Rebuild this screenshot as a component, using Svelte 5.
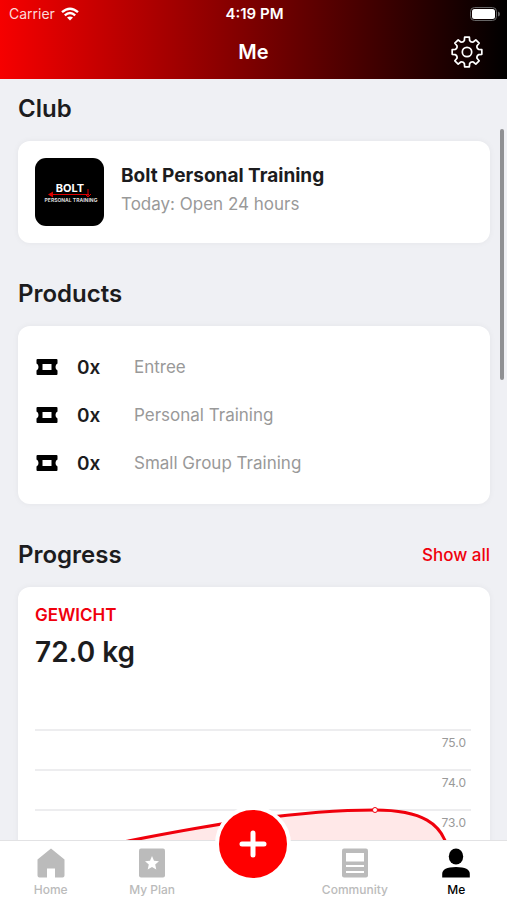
<script>
	const products = [
		{ count: 0, name: 'Entree' },
		{ count: 0, name: 'Personal Training' },
		{ count: 0, name: 'Small Group Training' }
	];

	const gridLines = [
		{ y: 20, label: '75.0' },
		{ y: 60, label: '74.0' },
		{ y: 100, label: '73.0' }
	];

	const curve = 'M0 166 C30 148 60 138 88 132 C150 120 250 100 340 100 C390 100 405 116 411 133 C415 143 424 141 438 141';

	// outline of the settings cog, eight teeth around the centre
	function cog(teeth) {
		const point = (r, deg) => {
			const a = (deg * Math.PI) / 180;
			return `${(16 + r * Math.cos(a)).toFixed(2)} ${(16 + r * Math.sin(a)).toFixed(2)}`;
		};
		let d = '';
		for (let i = 0; i < teeth; i++) {
			const a = (i * 360) / teeth;
			d += `${i ? 'L' : 'M'}${point(11.8, a - 13)} L${point(15, a - 9)} L${point(15, a + 9)} L${point(11.8, a + 13)} `;
			d += `Q${point(10.2, a + 22.5)} ${point(11.8, a + 32)} `;
		}
		return d + 'Z';
	}
</script>

<div class="app">
	<header>
		<div class="status">
			<span class="carrier">
				Carrier
				<svg width="18" height="14" viewBox="0 0 18 14" fill="none" stroke="#fff" stroke-width="2.4">
					<path d="M1 5.2 Q9 -1.8 17 5.2" />
					<path d="M3.8 8.4 Q9 3.8 14.2 8.4" />
					<path d="M9 13.6 L6 10.6 Q9 8.2 12 10.6 Z" fill="#fff" stroke="none" />
				</svg>
			</span>
			<span class="time">4:19 PM</span>
			<span class="battery">
				<svg width="30" height="14" viewBox="0 0 30 14">
					<rect x="0.5" y="0.5" width="26" height="13" rx="4" fill="none" stroke="#666" />
					<rect x="2" y="2" width="23" height="10" rx="2.5" fill="#fff" />
					<path d="M28 4.5 Q30 5 30 7 T28 9.5 Z" fill="#666" />
				</svg>
			</span>
		</div>
		<div class="titlebar">
			<h1>Me</h1>
			<button class="settings" aria-label="Settings">
				<svg width="32" height="32" viewBox="0 0 32 32" fill="none" stroke="#fff" stroke-width="1.7" stroke-linejoin="round">
					<path d={cog(8)} />
					<circle cx="16" cy="16" r="4.7" />
				</svg>
			</button>
		</div>
	</header>

	<main>
		<section>
			<h2>Club</h2>
			<div class="card club">
				<svg class="logo" width="69" height="68" viewBox="0 0 69 68">
					<rect width="69" height="68" rx="11" fill="#000" />
					<text x="35" y="34" font-size="11" font-weight="700" fill="#fff" text-anchor="middle">BOLT</text>
					<path d="M14 36.500 H54 M53 31 V39 M50 36 L53 39 L56 36" fill="none" stroke="#d00" />
					<path d="M13 36.500 L18 33.500 V39.500 Z" fill="#d00" />
					<text x="36" y="44" font-size="5" font-weight="700" fill="#ddd" text-anchor="middle">PERSONAL TRAINING</text>
				</svg>
				<div>
					<h3>Bolt Personal Training</h3>
					<p>Today: Open 24 hours</p>
				</div>
			</div>
		</section>

		<section>
			<h2>Products</h2>
			<ul class="card products">
				{#each products as product}
					<li>
						<svg width="24" height="16" viewBox="0 0 24 16">
							<path
								fill="#000"
								fill-rule="evenodd"
								d="M2.500 0 H21.500 Q22.500 0 22.500 1 V4.500 Q20.500 5 20.500 8 T22.500 11.500 V15 Q22.500 16 21.500 16 H2.500 Q1.500 16 1.500 15 V11.500 Q3.500 11 3.500 8 T1.500 4.500 V1 Q1.500 0 2.500 0 Z M7.500 5 V11 H16.500 V5 Z"
							/>
						</svg>
						<span class="count">{product.count}x</span>
						<span class="name">{product.name}</span>
					</li>
				{/each}
			</ul>
		</section>

		<section>
			<div class="heading">
				<h2>Progress</h2>
				<a href="#progress">Show all</a>
			</div>
			<div class="card progress">
				<h4>GEWICHT</h4>
				<p class="weight">72.0 kg</p>
				<svg class="chart" viewBox="0 0 438 180">
					{#each gridLines as line}
						<path d="M0 {line.y} H436" stroke="#ededef" stroke-width="2" />
						<text x="431" y={line.y + 17} font-size="12" fill="#999" text-anchor="end">{line.label}</text>
					{/each}
					<path d="{curve} V180 H0 Z" fill="#f00" fill-opacity="0.09" />
					<path d={curve} fill="none" stroke="#f0000c" stroke-width="3" />
					<circle cx="340" cy="100" r="2.500" fill="#fff" stroke="#f0000c" />
				</svg>
			</div>
		</section>
	</main>
	<div class="scrollbar"></div>

	<nav>
		<a href="#home">
			<svg width="30" height="30" viewBox="0 0 30 30" fill="#bbb">
				<path d="M15 0.500 L28.500 11.500 V27.500 Q28.500 29.500 26.500 29.500 H19 V20.500 H11 V29.500 H3.500 Q1.500 29.500 1.500 27.500 V11.500 Z" />
			</svg>
			Home
		</a>
		<a href="#plan">
			<svg width="30" height="30" viewBox="0 0 30 30">
				<rect x="2" y="0.500" width="26" height="29" rx="2" fill="#bbb" />
				<path d="M15 8 L17 12.700 L22 13.200 L18.200 16.500 L19.300 21.500 L15 18.900 L10.700 21.500 L11.800 16.500 L8 13.200 L13 12.700 Z" fill="#fff" />
			</svg>
			My Plan
		</a>
		<div class="add">
			<button aria-label="Add">
				<svg width="28" height="28" viewBox="0 0 28 28" stroke="#fff" stroke-width="5" stroke-linecap="round">
					<path d="M14 3 V25 M3 14 H25" />
				</svg>
			</button>
		</div>
		<a href="#community">
			<svg width="30" height="30" viewBox="0 0 30 30">
				<rect x="2" y="0.500" width="26" height="29" rx="2" fill="#bbb" />
				<path d="M6 5 H24 V13.500 H6 Z M6 17 H24 V19 H6 Z M6 23 H24 V25 H6 Z" fill="#fff" />
			</svg>
			Community
		</a>
		<a href="#me" class="active">
			<svg width="30" height="30" viewBox="0 0 30 30" fill="#000">
				<ellipse cx="15" cy="8.500" rx="7.200" ry="8" />
				<path d="M1.200 29.500 V26 Q1.200 19 15 19 T28.800 26 V29.500 Z" />
			</svg>
			Me
		</a>
	</nav>
</div>

<style>
	:global(body) {
		margin: 0;
	}

	.app {
		position: relative;
		display: flex;
		flex-direction: column;
		height: 100vh;
		background: #eff0f4;
		color: #1c1c1e;
		font-family: Inter, 'Liberation Sans', sans-serif;
	}

	h1,
	h2,
	h3,
	h4,
	p,
	ul {
		margin: 0;
		padding: 0;
		font-weight: 600;
	}

	svg {
		display: block;
	}

	button {
		border: none;
		padding: 0;
		cursor: pointer;
	}

	header {
		color: #fff;
		background: linear-gradient(90deg, #f60000, #000);
	}

	.status {
		display: grid;
		grid-template-columns: 1fr auto 1fr;
		align-items: center;
		height: 27px;
		padding: 0 7px 0 9px;
		font-size: 14px;
	}

	.carrier {
		display: flex;
		align-items: center;
		gap: 6px;
		color: #fcd9d9;
	}

	.time {
		font-size: 15px;
		font-weight: 600;
	}

	.battery {
		justify-self: end;
	}

	.titlebar {
		display: grid;
		grid-template-columns: 1fr auto 1fr;
		align-items: center;
		height: 52px;
		padding: 0 24px 2px;
		box-sizing: border-box;

		h1 {
			grid-column: 2;
			font-size: 20px;
			line-height: 24px;
		}
	}

	.settings {
		justify-self: end;
		background: none;
	}

	main {
		flex: 1;
		min-height: 0;
		overflow-y: auto;
		scrollbar-width: none;
		padding: 14px 17px 0 18px;
	}

	section {
		margin-bottom: 35px;
	}

	h2 {
		margin-bottom: 16px;
		font-size: 24px;
		line-height: 32px;
	}

	.heading {
		display: flex;
		justify-content: space-between;

		a {
			color: #f0000c;
			font-size: 17px;
			font-weight: 500;
			line-height: 32px;
			text-decoration: none;
		}
	}

	.card {
		padding: 17px;
		border-radius: 12px;
		background: #fff;
		box-shadow: 0 0 6px rgba(0, 0, 0, 0.05);
	}

	.club {
		display: flex;
		gap: 17px;

		h3 {
			margin-top: 4px;
			font-size: 19px;
			font-weight: 700;
			line-height: 28px;
		}

		p {
			color: #999;
			font-size: 17px;
			font-weight: 400;
			line-height: 28px;
		}
	}

	.products {
		list-style: none;

		li {
			display: flex;
			align-items: center;
			height: 48px;
		}

		.count {
			width: 57px;
			margin-left: 18px;
			font-size: 19px;
			font-weight: 600;
		}

		.name {
			color: #999;
			font-size: 17px;
			font-weight: 400;
		}
	}

	.progress {
		h4 {
			color: #f0000c;
			font-size: 17px;
			line-height: 22px;
		}

		.weight {
			margin: 6px 0 38px;
			font-size: 28px;
			line-height: 40px;
		}
	}

	.chart {
		width: 100%;
	}

	.scrollbar {
		position: absolute;
		top: 129px;
		right: 3px;
		width: 4px;
		height: 251px;
		border-radius: 2px;
		background: #8f9093;
	}

	nav {
		display: grid;
		grid-template-columns: repeat(5, 1fr);
		height: 60px;
		box-sizing: border-box;
		border-top: 1px solid #e2e2e4;
		background: #fff;

		a {
			display: flex;
			flex-direction: column;
			align-items: center;
			gap: 4px;
			padding-top: 7px;
			color: #bbb;
			font-size: 12px;
			font-weight: 500;
			line-height: 16px;
			text-decoration: none;
		}

		.active {
			color: #000;
		}
	}

	.add {
		position: relative;

		button {
			position: absolute;
			top: -35px;
			left: 50%;
			display: grid;
			place-items: center;
			width: 76px;
			height: 76px;
			border: 4px solid #fff;
			border-radius: 50%;
			background: #f00;
			transform: translateX(-50%);
		}
	}
</style>
